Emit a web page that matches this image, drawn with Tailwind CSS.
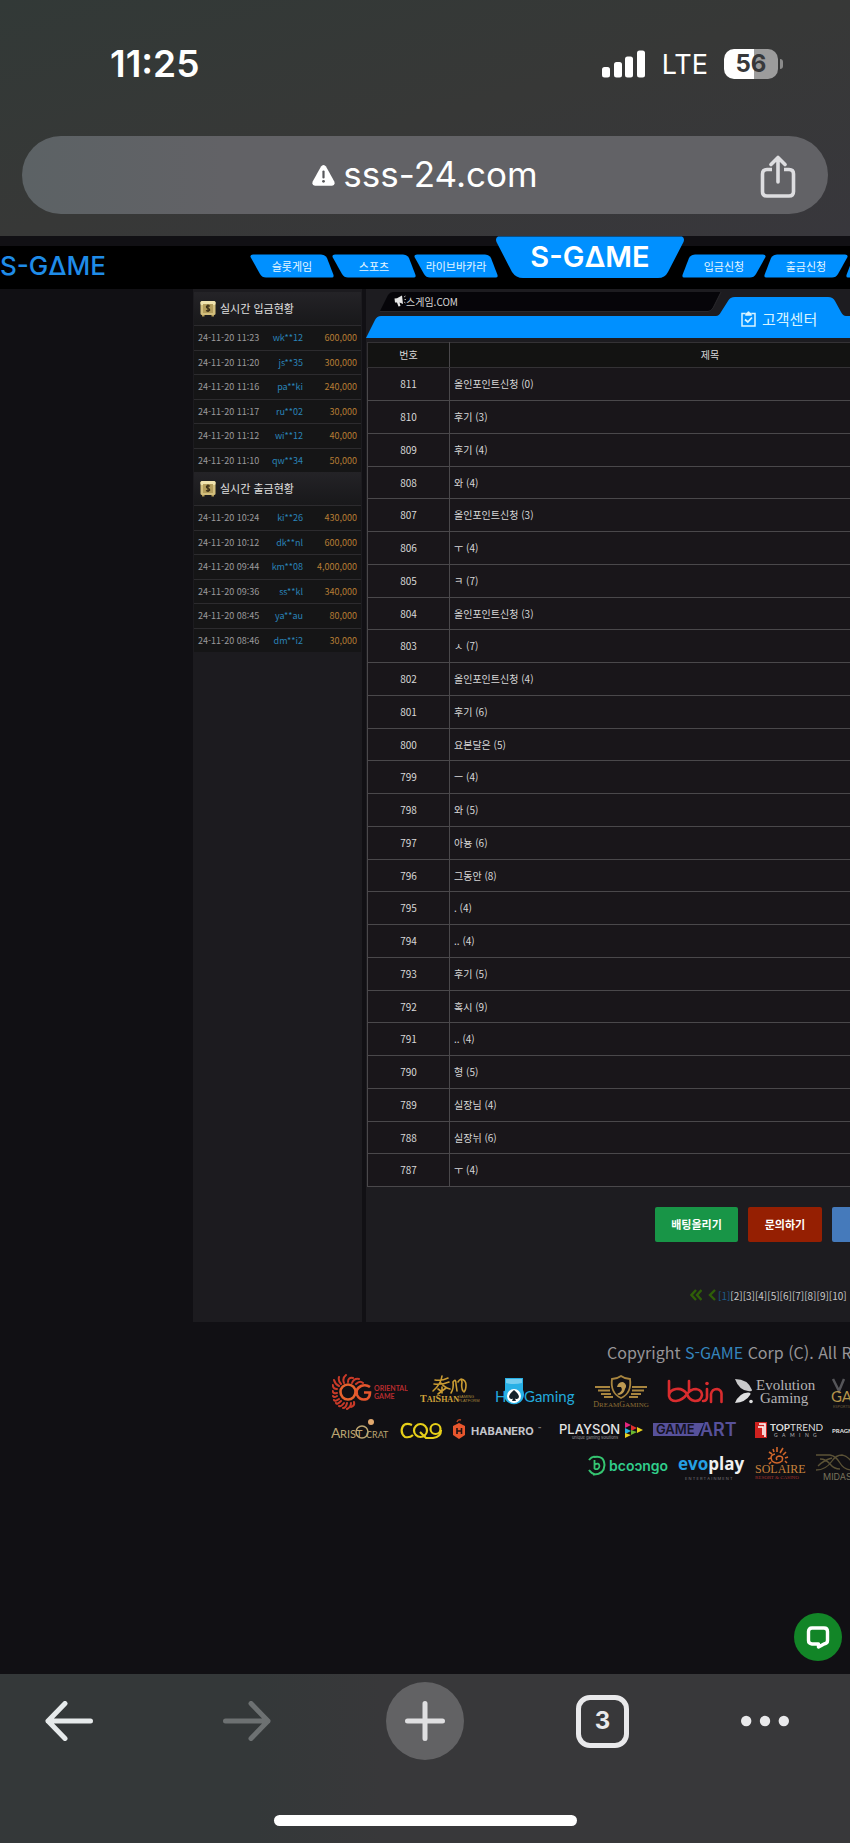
<!DOCTYPE html>
<html lang="ko">
<head>
    <meta charset="UTF-8">
    <meta name="viewport" content="width=device-width, initial-scale=1.0">
    <title>S-GAME 고객센터</title>
    <script src="https://cdn.jsdelivr.net/npm/@tailwindcss/browser@4"></script>
</head>
<body class="min-h-screen flex flex-col overflow-x-hidden bg-[#111014] text-white font-['Noto_Sans_CJK_KR','Noto_Sans',sans-serif]">

    <!-- Shared shapes -->
    <svg class="hidden">
        <symbol id="tab-left" viewBox="0 0 84 24">
            <path d="M3 0.500H71Q75 0.500 77 4L83.500 21Q84 23.500 82 23.500H16Q12 23.500 10 20L0.500 3Q0 0.500 3 0.500Z" fill="#0090ff"/>
        </symbol>
        <symbol id="tab-right" viewBox="0 0 84 24">
            <path d="M81 0.500H13Q9 0.500 7 4L0.500 21Q0 23.500 2 23.500H68Q72 23.500 74 20L83.500 3Q84 0.500 81 0.500Z" fill="#0090ff"/>
        </symbol>
        <symbol id="safe" viewBox="0 0 16 17">
            <rect x="0.500" y="1" width="15" height="14" rx="1.500" fill="#d3bf7d"/>
            <rect x="0.500" y="1" width="15" height="4" rx="1.500" fill="#f0e3ae"/>
            <rect x="3" y="4" width="10" height="9" fill="#b39d5c"/>
            <path d="M2 15h2.500v1.500H2zM11.500 15H14v1.500h-2.500z" fill="#b29a55"/>
            <path d="M10 6.300Q8 5 6.500 6.300Q6.200 8 8 8.300Q10 8.800 9.700 10.200Q8 11.600 6 10.400M8 4.500v7.500" fill="none" stroke="#3b2f17" stroke-width="1.200"/>
        </symbol>
    </svg>

    <!-- Phone status bar and address bar -->
    <div class="bg-linear-to-br from-[#323937] via-[#373837] to-[#38373c] px-[22px] pb-[22px] font-[Inter,sans-serif]">
        <div class="h-[136px] flex items-start justify-between pt-11 pl-[88px] pr-[45px]">
            <span class="text-[37px] leading-10 font-semibold">11:25</span>
            <div class="flex items-center h-10 gap-4">
                <svg class="w-[44px] h-7" viewBox="0 0 44 28" fill="#fff">
                    <rect x="0" y="17" width="8" height="10.500" rx="2.500"/>
                    <rect x="12" y="12" width="8" height="15.500" rx="2.500"/>
                    <rect x="23" y="6.500" width="8" height="21" rx="2.500"/>
                    <rect x="35" y="0.500" width="8" height="27" rx="2.500"/>
                </svg>
                <span class="text-[27px] leading-10 pt-px">LTE</span>
                <div class="flex items-center gap-0.5">
                    <div class="w-[54px] h-[30px] rounded-[10px] bg-linear-to-r from-white from-56% to-[#9c9c9c] to-56% text-[#37383a] text-2xl font-bold flex items-center justify-center">56</div>
                    <div class="w-[3px] h-2.5 rounded-r-full bg-[#8b8b8b]"></div>
                </div>
            </div>
        </div>
        <div class="h-[78px] rounded-full bg-linear-to-r from-[#5c6265] to-[#626266] to-25% flex items-center relative">
            <div class="flex-1 flex items-center justify-center gap-2">
                <svg class="w-[23px] h-[21px]" viewBox="0 0 23 21">
                    <path d="M11.500 0Q13 0 14 1.600L22.300 16.500Q23.500 20.500 20 20.800H3Q-0.500 20.500 0.700 16.500L9 1.600Q10 0 11.500 0Z" fill="#fff"/>
                    <path d="M11.500 6.500v6" stroke="#57585b" stroke-width="2.200" stroke-linecap="round"/>
                    <circle cx="11.500" cy="16.300" r="1.400" fill="#57585b"/>
                </svg>
                <span class="text-[35px] leading-10 pb-0.5">sss-24.com</span>
            </div>
            <button aria-label="공유" class="absolute right-8 top-[19px]">
                <svg class="w-9 h-[43px]" viewBox="0 0 36 43" fill="none" stroke="#dddde0" stroke-width="3.600" stroke-linecap="round" stroke-linejoin="round">
                    <path d="M12 14.500H7Q2.500 14.500 2.500 19V36.500Q2.500 41 7 41H29Q33.500 41 33.500 36.500V19Q33.500 14.500 29 14.500H24" stroke-linecap="butt"/>
                    <path d="M18 27V3M11 9.500L18 2.500L25 9.500"/>
                </svg>
            </button>
        </div>
    </div>

    <!-- Site header -->
    <header class="h-[53px] flex items-end pb-[11px] bg-[linear-gradient(#111014_10px,#000_10px)]">
        <a href="#" class="w-[250px] shrink-0 text-[26px] leading-6 font-medium text-[#1f8ce8] font-[Inter,sans-serif]">S-GΔME</a>
        <nav class="flex items-end text-[11px] leading-6 text-center text-[#e4f6ff] whitespace-nowrap">
            <a href="#" class="relative w-[84px] h-6 -mr-0.5 shrink-0"><svg class="absolute inset-0 w-full h-full"><use href="#tab-left"/></svg><span class="relative">슬롯게임</span></a>
            <a href="#" class="relative w-[84px] h-6 -mr-0.5 shrink-0"><svg class="absolute inset-0 w-full h-full"><use href="#tab-left"/></svg><span class="relative">스포츠</span></a>
            <a href="#" class="relative w-[84px] h-6 -mr-0.5 shrink-0"><svg class="absolute inset-0 w-full h-full"><use href="#tab-left"/></svg><span class="relative">라이브바카라</span></a>
            <a href="#" class="relative w-[188px] h-[42px] shrink-0 text-[29px] leading-[42px] font-semibold text-white font-[Inter,sans-serif]">
                <svg class="absolute inset-0 w-full h-full" viewBox="0 0 188 42"><path d="M2 0.500H186Q189 2 187.500 6L172 36Q169 42 162 42H27Q20 42 16 36L0.500 6Q-1 2 2 0.500Z" fill="#0090ff"/></svg>
                <span class="relative">S-GΔME</span>
            </a>
            <a href="#" class="relative w-[84px] h-6 -ml-0.5 shrink-0"><svg class="absolute inset-0 w-full h-full"><use href="#tab-right"/></svg><span class="relative">입금신청</span></a>
            <a href="#" class="relative w-[84px] h-6 -ml-0.5 shrink-0"><svg class="absolute inset-0 w-full h-full"><use href="#tab-right"/></svg><span class="relative">출금신청</span></a>
            <a href="#" aria-label="머니이동" class="relative w-[84px] h-6 -ml-0.5 shrink-0"><svg class="absolute inset-0 w-full h-full"><use href="#tab-right"/></svg></a>
        </nav>
    </header>

    <div class="flex gap-1 pl-[193px] overflow-hidden">
        <!-- Live deposits and withdrawals -->
        <aside class="w-[169px] shrink-0 bg-[#1c1b1f] px-px pt-[3px]">
            <h2 class="h-[33px] flex items-center gap-1 pl-1.5 text-[11px] text-[#e0e0e0] bg-linear-to-b from-[#242327] to-[#18181a]"><svg class="w-4 h-[17px]"><use href="#safe"/></svg>실시간 입금현황</h2>
            <ul id="deposits" class="h-[147px] grid grid-rows-6 text-[9px] bg-[#151516]"></ul>
            <h2 class="h-[33px] flex items-center gap-1 pl-1.5 text-[11px] text-[#e0e0e0] bg-linear-to-b from-[#242327] to-[#18181a]"><svg class="w-4 h-[17px]"><use href="#safe"/></svg>실시간 출금현황</h2>
            <ul id="withdrawals" class="h-[147px] grid grid-rows-6 text-[9px] bg-[#151516]"></ul>
        </aside>

        <!-- Board -->
        <main class="flex-1 min-w-0 overflow-hidden bg-[#1d1c20]">
            <div class="relative h-[53px]">
                <svg class="absolute left-0 top-0 w-[600px] h-[53px]" viewBox="0 0 600 53">
                    <path d="M14 22L22 6Q24 3 27 3H355L347 19Q345 22.500 342 22.500Z" fill="#060509"/>
                    <path d="M14 22.500H342Q345 22.500 347 19L355 3" fill="none" stroke="#29282c"/>
                    <path d="M0 49L9 31Q11 27 15 27H350Q353 27 355 23L362 12Q364 8 369 8H462Q467 8 469 12L475 23Q477 27 480 27H600V49Z" fill="#0090ff"/>
                </svg>
                <p class="absolute left-7 top-0.5 h-5 flex items-center text-[10px] text-[#d6d6d6]">
                    <svg class="w-3 h-3" viewBox="0 0 12 12" fill="#e6e6e6"><path d="M0.500 3.500L3 3.200L8 0.500L9 9L5.500 7.500L6.500 11L4.500 11.500L3 7.500L1 7.500Z"/><path d="M10 2L11.500 1M10.500 4.500H12M10 7L11.500 8" stroke="#aaa"/></svg>
                    스게임.COM
                </p>
                <h1 class="absolute left-[375px] top-[18px] flex items-center gap-1.5 text-[15px] leading-6 text-[#d9f4ff] whitespace-nowrap">
                    <svg class="w-[15px] h-4" viewBox="0 0 15 16" fill="none" stroke="#d9f4ff" stroke-width="1.500"><path d="M4 2.500H1V15H14V2.500H11"/><path d="M5 4V2.500H6.500Q7.500 -0.500 8.500 2.500H10V4Z" fill="#d9f4ff"/><path d="M4 8.500L6.800 11L11 6.500" stroke-width="1.800"/></svg>
                    고객센터
                </h1>
            </div>

            <table class="ml-px w-[604px] table-fixed border-collapse text-[10px] leading-4 text-[#d8d8d8] bg-[#19161a]">
                <thead class="bg-[#131312]">
                    <tr class="h-[25px]">
                        <th class="w-[82px] font-normal border border-[#343235] border-r-[#4a484b]">번호</th>
                        <th class="font-normal border border-[#343235]">제목</th>
                    </tr>
                </thead>
                <tbody id="posts" class="[&>tr:nth-child(4n)]:h-8"></tbody>
            </table>

            <div class="flex gap-2.5 pl-[289px] pt-5 text-[11px] font-bold whitespace-nowrap">
                <button class="w-[83px] h-[35px] shrink-0 rounded-xs bg-[#189547]">배팅올리기</button>
                <button class="w-[74px] h-[35px] shrink-0 rounded-xs bg-[#951f02]">문의하기</button>
                <button aria-label="글쓰기" class="w-[74px] h-[35px] shrink-0 rounded-xs bg-[#457abb]"></button>
            </div>

            <div class="flex items-center pl-[324px] pt-[26px] h-20 text-[10px] text-[#c8c8c8] whitespace-nowrap">
                <a href="#" aria-label="처음" class="mr-1.5 shrink-0"><svg class="w-3 h-3" viewBox="0 0 12 12" fill="none" stroke="#2f5f08" stroke-width="2.400"><path d="M6 1L1.500 6L6 11M11.500 1L7 6L11.500 11"/></svg></a>
                <a href="#" aria-label="이전" class="mr-0.5 shrink-0"><svg class="w-2 h-3" viewBox="0 0 8 12" fill="none" stroke="#2f5f08" stroke-width="2.400"><path d="M7 1L2 6L7 11"/></svg></a>
                <div id="pages" class="flex shrink-0"></div>
                <a href="#" aria-label="다음" class="ml-1 shrink-0"><svg class="w-2 h-3" viewBox="0 0 8 12" fill="none" stroke="#2f5f08" stroke-width="2.400"><path d="M1 1L6 6L1 11"/></svg></a>
            </div>
        </main>
    </div>

    <!-- Footer -->
    <footer class="flex-1 overflow-hidden whitespace-nowrap">
        <p class="pl-[607px] pt-[18px] text-base leading-6 text-[#979598]">Copyright <span class="text-[#3585bd]">S-GAME</span> Corp (C). All Rights Reserved.</p>

        <div class="flex gap-3 pl-[332px] pt-2.5 *:shrink-0">
            <svg class="w-[76px] h-9" viewBox="0 0 76 36">
                <g fill="none" stroke="#c93a28" stroke-width="2" stroke-linecap="round">
                    <path d="M7 12Q3 10 2 6M9 10Q6 7 7 3M12 9Q10 4 14 1M16 8Q16 3 21 4M20 9Q22 4 27 5M24 10Q28 6 31 9M5 15Q1 15 0.800 11M5 19Q1 20 0.800 17M5 22Q2 24 1 22M7 25Q3 28 2 26M9 27Q5 31 4 29M12 29Q9 33 7 32M15 29Q14 34 11 34M19 29Q19 33 15 35M22 28Q23 32 19 33"/>
                </g>
                <circle cx="16" cy="18" r="7.500" fill="none" stroke="#e5622d" stroke-width="2.600"/>
                <path d="M38 13Q34 10 29 12Q23 15 25 21Q28 27 35 25Q38 23 38 18.500H32" fill="none" stroke="#e5562d" stroke-width="2.600"/>
                <text x="42" y="17" font-family="Lato" font-weight="700" font-size="7" fill="#b92c2e">ORIENTAL</text>
                <text x="42" y="25" font-family="Lato" font-weight="700" font-size="7" fill="#b92c2e">GAME</text>
            </svg>
            <svg class="w-[63px] h-9" viewBox="0 0 63 36">
                <g fill="none" stroke="#c99b32" stroke-width="1.600" stroke-linecap="round">
                    <path d="M15 6Q22 7 28 4M14 10Q22 11 29 8M22 2Q21 10 13 17M21 9Q25 14 30 15M22 13V19M18 15L21 17M26 14L18 20M31 19Q34 14 33 8Q36 4 36 10L37 17M38 8Q41 3 42 8Q41 14 43 17M41 5Q46 6 46 11Q46 16 44 18"/>
                </g>
                <text x="0" y="28" font-family="Liberation Serif" font-weight="700" font-size="10" fill="#d0a23a">T<tspan font-size="8">AI</tspan>S<tspan font-size="8">HAN</tspan></text>
                <text x="38" y="24" font-family="Liberation Sans" font-size="4" fill="#a8863a">GAMING</text>
                <text x="38" y="28" font-family="Liberation Sans" font-size="4" fill="#a8863a">PLATFORM</text>
            </svg>
            <svg class="w-20 h-9" viewBox="0 0 80 36">
                <text x="0" y="28" font-family="Lato" font-size="15" fill="#22a9dc">H</text>
                <path d="M10 4H28V16A10 10 0 1 1 10 16Z" fill="#27b0e6"/>
                <path d="M11 5H27V9Q19 11 11 9Z" fill="#74cdf0"/>
                <circle cx="19" cy="22" r="7" fill="#fff"/>
                <path d="M19 16Q24 20 24 23Q23 26 20 24.500L21 27H17L18 24.500Q15 26 14 23Q14 20 19 16Z" fill="#17232c"/>
                <text x="29" y="28" font-family="Lato" font-size="15" fill="#22a9dc">Gaming</text>
            </svg>
            <svg class="w-[68px] h-9" viewBox="0 0 68 36">
                <g fill="none" stroke="#a8853f" stroke-width="1.800">
                    <path d="M34 2Q38 5 43 5Q45 19 34 24Q23 19 25 5Q30 5 34 2Z"/>
                    <path d="M23 13H8M23 16.500H11M24 20H14M26 23H17M45 13H60M45 16.500H57M44 20H54M42 23H51"/>
                </g>
                <path d="M30 20Q37 17 34 13L30 13Q31 8 36 8Q41 11 38 15Q37 20 32 21Z" fill="#bd9a52"/>
                <text x="34" y="33" text-anchor="middle" font-family="Liberation Serif" font-size="8" fill="#8d6f34">D<tspan font-size="7">REAM</tspan>G<tspan font-size="7">AMING</tspan></text>
            </svg>
            <svg class="w-14 h-9" viewBox="0 0 56 36">
                <path d="M2 7V22Q3 27 9 27Q16 26 20 20Q24 15 29 15Q35 16 35 21Q34 27 28 27Q22 26 20 20Q16 14 9 15Q3 16 2 21M22 7V18M40 15V23Q40 27 36 27M44 28V20Q45 15 50 15Q55 16 54.500 21V28" fill="none" stroke="#d92c2e" stroke-width="2.600" stroke-linecap="round"/>
                <circle cx="40" cy="9.500" r="1.800" fill="#d92c2e"/>
            </svg>
            <svg class="w-[83px] h-9" viewBox="0 0 83 36">
                <path d="M0 5Q13 5 17 16Q17 18 13 17Q4 16 0 5Z" fill="#c9c9cb"/>
                <path d="M0 29Q4 19 13 18.500Q17 19 15 21Q11 28 0 29Z" fill="#dededf"/>
                <circle cx="16" cy="27.500" r="1.800" fill="#ddd"/>
                <text x="21" y="16" font-family="Liberation Serif" font-size="15" fill="#b4b4b6">Evolution</text>
                <text x="25" y="29" font-family="Liberation Serif" font-size="15" fill="#b4b4b6">Gaming</text>
            </svg>
            <svg class="w-[70px] h-9" viewBox="0 0 70 36">
                <path d="M3 5L9 17L14 5" fill="none" stroke="#555559" stroke-width="2.500"/>
                <text x="1" y="28" font-family="Lato" font-size="15" fill="#b4934a">GAMING</text>
                <text x="3" y="34" font-family="Lato" font-size="4" fill="#66563a">ESPORTS</text>
            </svg>
        </div>

        <div class="flex gap-[9px] pl-[331px] pt-2 *:shrink-0">
            <svg class="w-[60px] h-6" viewBox="0 0 60 24">
                <circle cx="40" cy="4" r="3" fill="#e2a96f"/>
                <text x="0" y="20" font-family="Lato" font-size="14" fill="#bca571">A</text>
                <text x="9" y="20" font-family="Lato" font-size="11" fill="#bca571">RIST</text>
                <circle cx="31" cy="14" r="6" fill="none" stroke="#bca571" stroke-width="1.500"/>
                <text x="35" y="20" font-family="Lato" font-size="9" fill="#bca571">CRAT</text>
            </svg>
            <svg class="w-[43px] h-6" viewBox="0 0 43 24" fill="none" stroke="#e7cf19" stroke-width="2.200">
                <path d="M12 7Q5 4 2.500 9Q0 15 5 19Q10 20 13 17"/><circle cx="20.500" cy="12.500" r="6.500"/><path d="M20 14L26 20H30"/><circle cx="35.500" cy="11" r="5"/><path d="M41 12Q41 19 33 20H26"/>
            </svg>
            <svg class="w-[91px] h-6" viewBox="0 0 91 24">
                <path d="M7 5L13 8V17L7 21L1 17V8Z" fill="#e8562d"/><path d="M5 4Q6 1 9 2" stroke="#b3421f" fill="none" stroke-width="1.500"/>
                <path d="M5 10V16M9.500 10V16M5 13H9.500" stroke="#1d1112" stroke-width="1.600"/>
                <text x="19" y="17" font-family="Inter" font-weight="700" font-size="11" fill="#c4c5cb">HABANERO</text>
                <text x="86" y="13" font-family="Inter" font-size="5" fill="#c4c5cb">™</text>
            </svg>
            <svg class="w-[92px] h-6" viewBox="0 0 92 24">
                <text x="7" y="16" font-family="Inter" font-weight="500" font-size="13" fill="#e4e4e4">PLAYSON</text>
                <text x="20" y="21" font-family="Inter" font-size="4" fill="#9a9a9c">unique gaming solutions</text>
                <path d="M73 4L79 7L73 10Z" fill="#e4257e"/><path d="M73 10L79 13L73 16Z" fill="#29b2e0"/><path d="M73 15L79 17L73 20Z" fill="#e8d11d"/><path d="M79 7L85 10L79 13Z" fill="#dd2e2e"/><path d="M79 12L85 14L79 17Z" fill="#6ab72f"/><path d="M85 9L91 12L85 15Z" fill="#e8d11d"/>
            </svg>
            <svg class="w-[89px] h-6" viewBox="0 0 89 24">
                <path d="M0 5H51L45 18H0Z" fill="#57519a"/>
                <text x="3" y="16" font-family="Inter" font-weight="600" font-size="13" fill="#14121f">GAME</text>
                <text x="47" y="18" font-family="Inter" font-weight="600" font-size="18" fill="#57519a">ART</text>
            </svg>
            <svg class="w-[72px] h-6" viewBox="0 0 72 24">
                <rect x="4" y="4" width="12" height="16" fill="#cf211f"/><path d="M7 9H12V17M8 6H14V19" fill="none" stroke="#fff" stroke-width="1.600"/>
                <text x="19" y="13" font-family="Lato" font-size="10" fill="#dcdcdc"><tspan font-weight="700">TOP</tspan>TREND</text>
                <g font-family="Lato" font-size="5" fill="#b9b9b9"><text x="23" y="19">G</text><text x="31" y="19">A</text><text x="39" y="19">M</text><text x="48" y="19">I</text><text x="54" y="19">N</text><text x="62" y="19">G</text></g>
            </svg>
            <svg class="w-20 h-6" viewBox="0 0 80 24">
                <text x="0" y="15" font-family="Lato" font-weight="900" font-size="6" fill="#d5d5d5">PRAGMATIC PLAY</text>
            </svg>
        </div>

        <div class="flex gap-2.5 pl-[588px] pt-1 *:shrink-0">
            <svg class="w-20 h-10" viewBox="0 0 80 40">
                <path d="M6 11Q16 9 16.500 19Q16 29 5 28.500M1 14Q4 10 7 11M1 24Q4 28 7 28.500" fill="none" stroke="#35c571" stroke-width="2"/>
                <path d="M6.500 14V23M6.500 19Q11 16 11.500 20Q11 24 6.500 23" fill="none" stroke="#35c571" stroke-width="1.800"/>
                <text x="21" y="25" font-family="Inter" font-weight="600" font-size="14" fill="#30cd8b">bcoɔngo</text>
            </svg>
            <svg class="w-[67px] h-10" viewBox="0 0 67 40">
                <text x="0" y="24" font-family="Open Sans" font-weight="700" font-size="17" fill="#25a0e4">evo<tspan fill="#f0f0f0">play</tspan></text>
                <text x="7" y="34" font-family="Inter" font-size="4" fill="#77777b">E N T E R T A I N M E N T</text>
            </svg>
            <svg class="w-[51px] h-10" viewBox="0 0 51 40">
                <path d="M20 8Q14 9 17 15Q22 19 27 15Q29 10 24 10Q20 11 22 14M17 8L14 6M19 6L18 3M22 6L22 1M25 7L28 2M28 9L31 6M30 12L33 11M30 15L32 17M16 12L13 13M16 16L14 18" fill="none" stroke="#d0662a" stroke-width="1.600"/>
                <text x="0" y="27" font-family="Liberation Serif" font-size="12" fill="#c8823c">SOLAIRE</text>
                <text x="0" y="33" font-family="Liberation Serif" font-size="5" fill="#a3322c">RESORT &amp; CASINO</text>
            </svg>
            <svg class="w-[72px] h-10" viewBox="0 0 72 40">
                <path d="M0 9H14Q20 10 24 17Q28 24 36 24M0 24Q10 24 16 15Q20 9 26 9Q34 10 40 24M4 13Q10 13 14 18Q18 23 24 23M2 20Q8 14 16 12" fill="none" stroke="#5b5236" stroke-width="1.300"/>
                <text x="7" y="34" font-family="Inter" font-size="9" fill="#77705a">MIDAS</text>
            </svg>
        </div>
    </footer>

    <!-- Chat button -->
    <button aria-label="채팅" class="fixed right-2 bottom-[182px] size-12 rounded-full bg-[#128527] flex items-center justify-center">
        <svg class="w-6 h-6" viewBox="0 0 24 24" fill="none" stroke="#fff" stroke-width="3.400" stroke-linejoin="round"><path d="M6 3H18Q21.500 3 21.500 6.500V15.500Q21.500 18.500 18 19L12.500 22V19H6Q2.500 18.500 2.500 15.500V6.500Q2.500 3 6 3Z"/></svg>
    </button>

    <!-- Browser toolbar -->
    <div class="h-[169px] bg-linear-to-r from-[#343839] from-30% to-[#38383a] to-45% flex flex-col items-center justify-between pt-2 pb-[17px]">
        <div class="w-full h-[78px] flex items-center justify-between pl-[45px] pr-[61px]">
            <button aria-label="뒤로" class="w-[63px]"><svg class="w-12 h-10" viewBox="0 0 48 40" fill="none" stroke="#e6eaeb" stroke-width="5" stroke-linecap="round" stroke-linejoin="round"><path d="M45.500 20H3M20 2.500L3 20L20 37.500"/></svg></button>
            <button aria-label="앞으로" class="w-[54px] flex justify-center"><svg class="w-12 h-10" viewBox="0 0 48 40" fill="none" stroke="#6d7172" stroke-width="5" stroke-linecap="round" stroke-linejoin="round"><path d="M2.500 20H45M28 2.500L45 20L28 37.500"/></svg></button>
            <button aria-label="새 탭" class="size-[78px] rounded-full bg-[#626264] flex items-center justify-center"><svg class="w-10 h-10" viewBox="0 0 40 40" stroke="#dfdfe1" stroke-width="5" stroke-linecap="round"><path d="M20 2.500V37.500M2.500 20H37.500"/></svg></button>
            <button class="size-[53px] rounded-[14px] border-[5px] border-[#e9e9eb] text-[#e9e9eb] text-2xl font-bold font-[Inter,sans-serif] flex items-center justify-center">3</button>
            <button aria-label="메뉴" class="w-12"><svg class="w-12 h-3" viewBox="0 0 48 12" fill="#e9e9eb"><circle cx="5.200" cy="6" r="5.200"/><circle cx="24" cy="6" r="5.200"/><circle cx="42.800" cy="6" r="5.200"/></svg></button>
        </div>
        <div class="w-[303px] h-[11px] rounded-full bg-white"></div>
    </div>

    <script>
        const deposits = [
            ['24-11-20 11:23', 'wk**12', '600,000'],
            ['24-11-20 11:20', 'js**35', '300,000'],
            ['24-11-20 11:16', 'pa**ki', '240,000'],
            ['24-11-20 11:17', 'ru**02', '30,000'],
            ['24-11-20 11:12', 'wi**12', '40,000'],
            ['24-11-20 11:10', 'qw**34', '50,000']
        ];
        const withdrawals = [
            ['24-11-20 10:24', 'ki**26', '430,000'],
            ['24-11-20 10:12', 'dk**nl', '600,000'],
            ['24-11-20 09:44', 'km**08', '4,000,000'],
            ['24-11-20 09:36', 'ss**kl', '340,000'],
            ['24-11-20 08:45', 'ya**au', '80,000'],
            ['24-11-20 08:46', 'dm**i2', '30,000']
        ];
        const titles = [
            '올인포인트신청 (0)', '후기 (3)', '후기 (4)', '와 (4)', '올인포인트신청 (3)',
            'ㅜ (4)', 'ㅋ (7)', '올인포인트신청 (3)', 'ㅅ (7)', '올인포인트신청 (4)',
            '후기 (6)', '요본달은 (5)', 'ㅡ (4)', '와 (5)', '아뇽 (6)',
            '그동안 (8)', '. (4)', '.. (4)', '후기 (5)', '혹시 (9)',
            '.. (4)', '형 (5)', '실장님 (4)', '실장뉘 (6)', 'ㅜ (4)'
        ];

        function renderList(id, rows) {
            document.getElementById(id).innerHTML = rows.map(([date, user, amount]) => `
                <li class="flex items-center border-t border-[#2c2b2e] pl-1 pr-1">
                    <span class="w-[62px] text-[#9b9a9c]">${date}</span>
                    <span class="w-[43px] text-right text-[#2a83b8]">${user}</span>
                    <span class="flex-1 text-right text-[#b57c34]">${amount}</span>
                </li>`).join('');
        }

        renderList('deposits', deposits);
        renderList('withdrawals', withdrawals);

        document.getElementById('posts').innerHTML = titles.map((title, i) => `
            <tr class="h-[33px]">
                <td class="text-center border border-[#4a484b]">${811 - i}</td>
                <td class="pl-1 border border-[#4a484b]"><a href="#">${title}</a></td>
            </tr>`).join('');

        document.getElementById('pages').innerHTML = Array.from({ length: 10 }, (_, i) =>
            `<a href="#" class="${i === 0 ? 'text-[#1d5c8c]' : ''}">[${i + 1}]</a>`).join('');
    </script>
</body>
</html>
